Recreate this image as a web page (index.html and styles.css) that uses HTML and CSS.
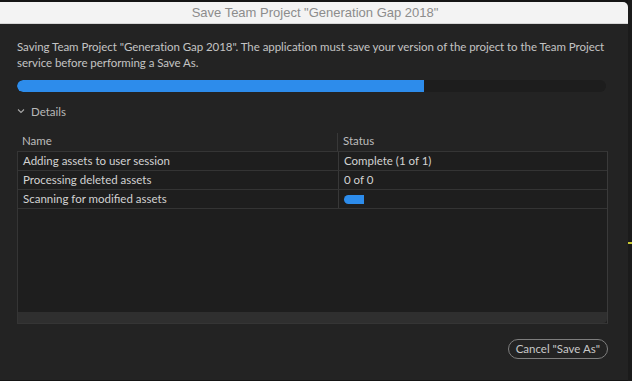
FILE: index.html
```html
<!DOCTYPE html>
<html>
<head>
<meta charset="utf-8">
<link rel="stylesheet" href="styles.css">
</head>
<body>
<div class="screen">
  <div class="dialog">
    <div class="titlebar">Save Team Project "Generation Gap 2018"</div>
    <div class="body">
      <p class="desc">Saving Team Project "Generation Gap 2018". The application must save your version of the project to the Team Project service before performing a Save As.</p>
      <div class="progress"><div class="fill" style="width:69.1%"></div></div>
      <div class="details">
        <svg class="chev" width="8" height="6" viewBox="0 0 8 6"><path d="M1 1.5 L4 4.5 L7 1.5" fill="none" stroke="#a8a8a8" stroke-width="1.1"/></svg>
        <span>Details</span>
      </div>
      <div class="table">
        <div class="thead">
          <div class="cell name">Name</div>
          <div class="cell status">Status</div>
        </div>
        <div class="tbox">
          <div class="row"><div class="cell name">Adding assets to user session</div><div class="cell status">Complete (1 of 1)</div></div>
          <div class="row"><div class="cell name">Processing deleted assets</div><div class="cell status">0 of 0</div></div>
          <div class="row"><div class="cell name">Scanning for modified assets</div><div class="cell status"><div class="mini"></div></div></div>
          <div class="spacer"></div>
          <div class="hscroll"></div>
        </div>
      </div>
      <div class="footer">
        <button class="btn">Cancel "Save As"</button>
      </div>
    </div>
  </div>
  <div class="side"><div class="mark"></div></div>
</div>
</body>
</html>
```
FILE: styles.css
```css
html, body {
  margin: 0;
  padding: 0;
  background: #161616;
}
.screen {
  width: 632px;
  height: 381px;
  display: flex;
  overflow: hidden;
  background: #151515;
}
.dialog {
  width: 628px;
  height: 378px;
  margin-top: 2px;
  display: flex;
  flex-direction: column;
  background: #232323;
  border-top-right-radius: 5px;
  overflow: hidden;
}
.titlebar {
  height: 21px;
  background: #f3f3f3;
  border-bottom: 1px solid #d6d6d6;
  color: #8c8c8c;
  font-family: "Liberation Sans", Arial, sans-serif;
  font-size: 13px;
  line-height: 21px;
  text-align: center;
  padding-left: 2px;
}
.body {
  flex: 1;
  padding: 15px 20px 0 17px;
  font-family: Lato, "Open Sans", sans-serif;
  font-size: 11.5px;
  color: #c4c4c4;
  display: flex;
  flex-direction: column;
}
.desc {
  margin: 0;
  line-height: 16px;
  letter-spacing: -0.05px;
}
.progress {
  margin-top: 9px;
  height: 12px;
  width: 589px;
  background: #1d1d1d;
  border-radius: 6px;
  overflow: hidden;
}
.fill {
  height: 100%;
  background: #2d8ceb;
  border-radius: 6px 0 0 6px;
}
.details {
  margin-top: 11px;
  height: 16px;
  display: flex;
  align-items: center;
  gap: 6px;
  color: #b8b8b8;
}
.table {
  margin-top: 14px;
  width: 591px;
  display: flex;
  flex-direction: column;
}
.thead {
  display: flex;
  height: 18px;
  color: #bcbcbc;
}
.thead .cell {
  line-height: 16px;
}
.cell.name {
  width: 320px;
  padding-left: 5px;
  box-sizing: border-box;
}
.cell.status {
  flex: 1;
  padding-left: 5px;
  border-left: 1px solid #383838;
}
.tbox {
  height: 171px;
  background: #1e1e1e;
  border: 1px solid #353535;
  border-right-color: #3a3a3a;
  display: flex;
  flex-direction: column;
  color: #d2d2d2;
}
.row {
  display: flex;
  height: 18px;
  line-height: 18px;
  border-bottom: 1px solid #343434;
}
.row .cell.status {
  display: flex;
  align-items: center;
}
.mini {
  width: 20px;
  height: 9px;
  background: #2d8ceb;
  border-radius: 5px 0 0 5px;
}
.spacer {
  flex: 1;
}
.hscroll {
  height: 11px;
  background: #2f2f2f;
  border-radius: 0 0 4px 0;
}
.footer {
  display: flex;
  justify-content: flex-end;
  padding-top: 15px;
  width: 591px;
}
.btn {
  height: 20px;
  padding: 0 7px;
  background: transparent;
  border: 1.5px solid #7e7e7e;
  border-radius: 10px;
  color: #c8c8c8;
  font-family: Lato, "Open Sans", sans-serif;
  font-size: 11.5px;
  line-height: 16px;
}
.side {
  flex: 1;
  background: #1b1b1b;
  position: relative;
}
.mark {
  position: absolute;
  left: 0;
  top: 242px;
  width: 4px;
  height: 2px;
  background: #c8c832;
}
```
